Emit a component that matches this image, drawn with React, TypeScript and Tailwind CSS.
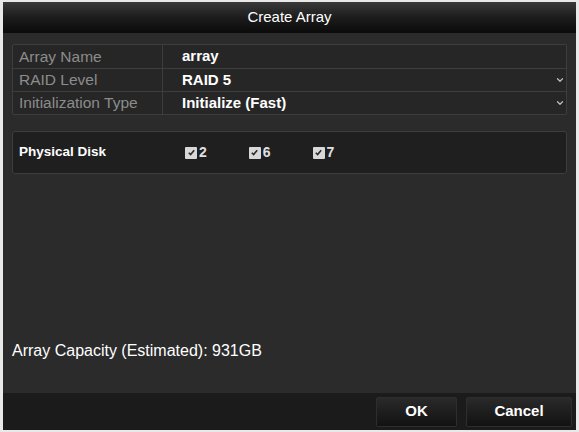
import { ChevronDown } from "lucide-react";

const rows = [
	{ label: "Array Name", value: "array", select: false },
	{ label: "RAID Level", value: "RAID 5", select: true },
	{ label: "Initialization Type", value: "Initialize (Fast)", select: true },
];

const disks = ["2", "6", "7"];

const CheckBox = () => (
	<span className="flex h-[12px] w-[12px] items-center justify-center rounded-[1px] bg-[#d8d8d8]">
		<svg width="9" height="9" viewBox="0 0 9 9">
			<path d="M1.8 4.8 L3.6 6.6 L7.2 2.2" fill="none" stroke="#2a2a2a" strokeWidth="1.6" />
		</svg>
	</span>
);

const App = () => {
	return (
		<div
			className="h-[432px] w-[579px] bg-[#e9e9e9] pt-[2px] pr-[3px] pb-[2px] pl-[3px]"
			style={{ fontFamily: '"Liberation Sans", Arial, sans-serif' }}
		>
			<div className="flex h-full flex-col bg-[#2b2b2b]">
				{/* title */}
				<div className="flex h-[31px] items-center justify-center bg-gradient-to-b from-[#3a3a3a] via-[#1c1c1c] to-[#0b0b0b] text-[15px] text-white">
					Create Array
				</div>

				<div className="flex flex-1 flex-col px-[9px] pt-[11px]">
					<div className="rounded-[2px] border border-[#3d3d3d] bg-[#262626]">
						{rows.map((row, idx) => (
							<div
								key={idx}
								className={`flex h-[23px] items-center ${idx > 0 ? "border-t border-[#3d3d3d]" : ""}`}
							>
								<div className="flex h-full w-[150px] items-center border-r border-[#3d3d3d] pl-[6px] text-[15.5px] text-[#8c8c8c]">
									{row.label}
								</div>
								<div className="flex h-full flex-1 items-center justify-between pl-[19px] pr-[1px] text-[15px] font-bold text-white">
									<span>{row.value}</span>
									{row.select && <ChevronDown size={10} strokeWidth={3} className="text-[#bdbdbd]" />}
								</div>
							</div>
						))}
					</div>

					<div className="mt-[16px] flex h-[43px] items-center rounded-[3px] border border-[#3d3d3d] bg-[#1f1f1f] pl-[6px]">
						<span className="w-[166px] text-[13.5px] font-bold text-white">Physical Disk</span>
						<div className="flex items-center gap-[42px]">
							{disks.map((d) => (
								<div key={d} className="flex items-center gap-[2px] text-[14px] font-bold text-[#e0e0e0]">
									<CheckBox />
									<span>{d}</span>
								</div>
							))}
						</div>
					</div>

					<div className="mt-auto mb-[30px] text-[16px] text-white">
						Array Capacity (Estimated): 931GB
					</div>
				</div>

				{/* footer */}
				<div className="flex h-[37px] items-center justify-end gap-[9px] bg-[#1b1b1b] pr-[4px]">
					<button className="h-[30px] w-[81px] rounded-[2px] border border-[#2e2e2e] bg-gradient-to-b from-[#2a2a2a] to-[#121212] text-[15px] font-bold text-white">
						OK
					</button>
					<button className="h-[30px] w-[106px] rounded-[2px] border border-[#2e2e2e] bg-gradient-to-b from-[#2a2a2a] to-[#121212] text-[15px] font-bold text-white">
						Cancel
					</button>
				</div>
			</div>
		</div>
	);
};

export default App;
